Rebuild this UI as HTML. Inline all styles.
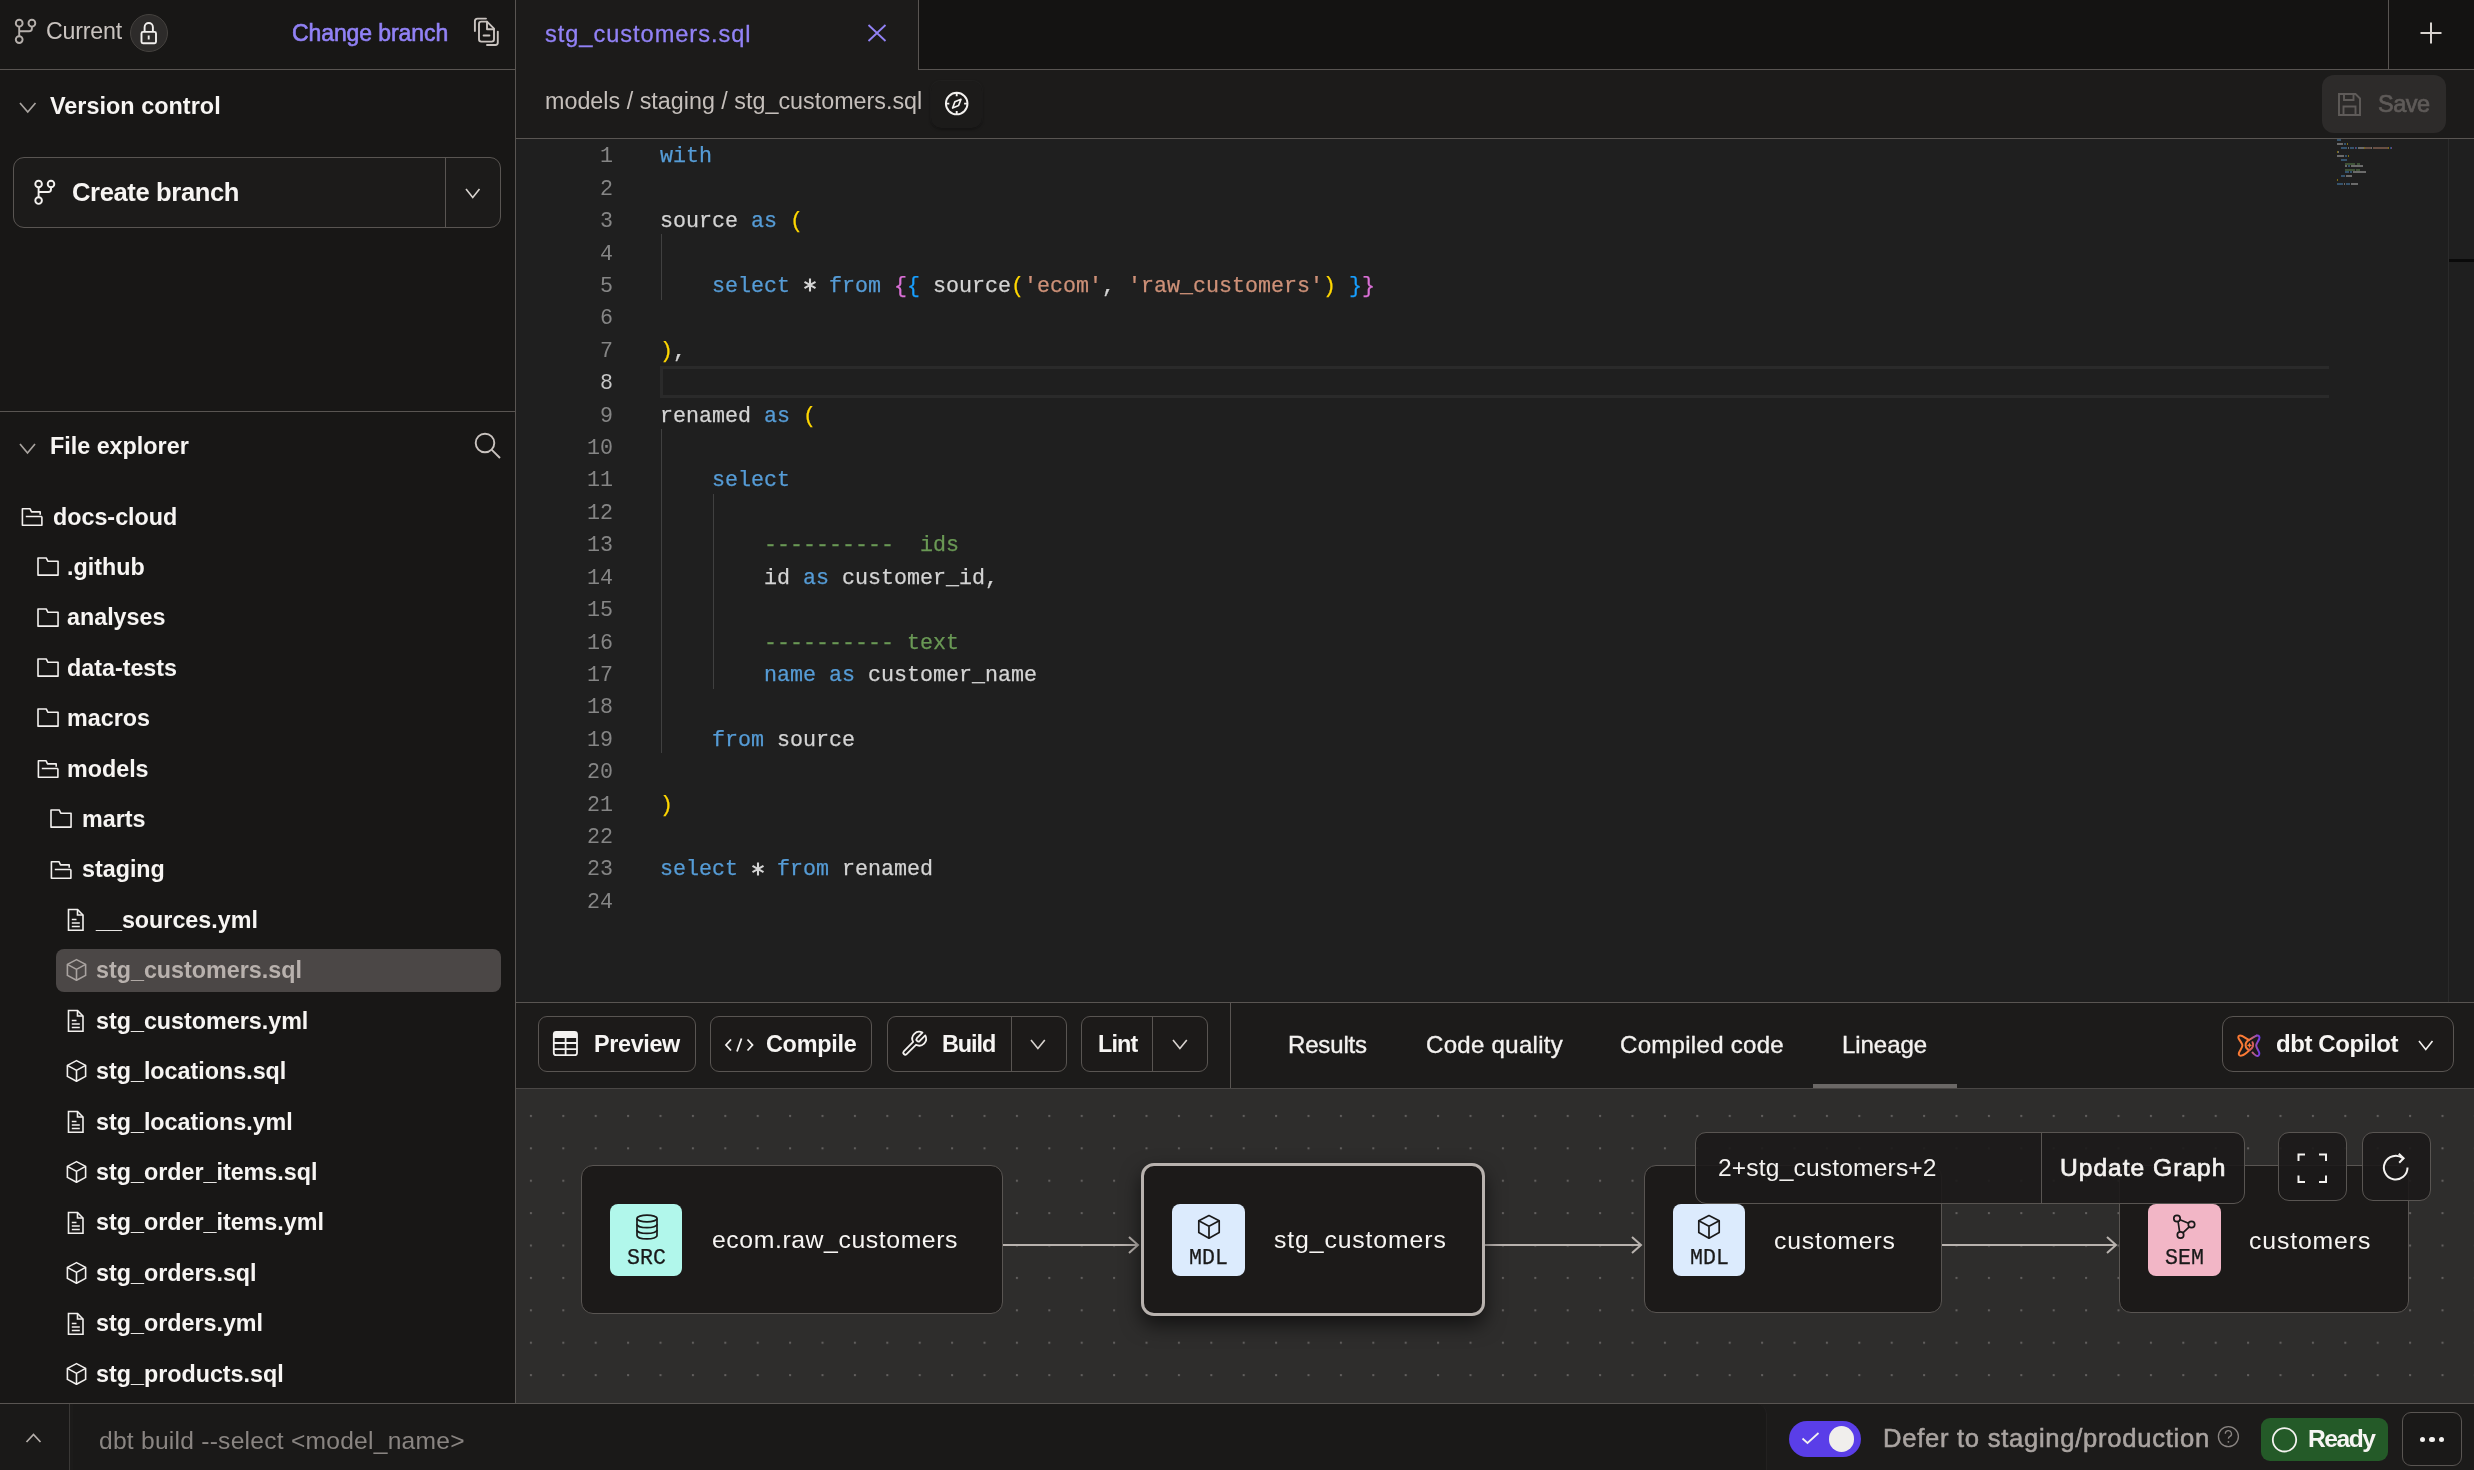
<!DOCTYPE html><html><head><meta charset="utf-8"><style>
html,body{margin:0;padding:0;background:#181716;}
body{width:2474px;height:1470px;position:relative;overflow:hidden;}
.r{position:absolute;box-sizing:border-box;}
.t{position:absolute;white-space:pre;line-height:1;will-change:transform;}
</style></head><body>
<div class="r" style="left:0.0px;top:0.0px;width:515.0px;height:1403.0px;background:#181716"></div>
<div class="r" style="left:516.0px;top:0.0px;width:1958.0px;height:1003.0px;background:#1f1f1f"></div>
<div class="r" style="left:516.0px;top:0.0px;width:402.0px;height:69.0px;background:#1c1b1a"></div>
<div class="r" style="left:918.0px;top:0.0px;width:1556.0px;height:69.0px;background:#141312"></div>
<div class="r" style="left:516.0px;top:69.0px;width:1958.0px;height:69.0px;background:#1c1b1a"></div>
<div class="r" style="left:515.0px;top:0.0px;width:1.0px;height:1403.0px;background:#595552"></div>
<div class="r" style="left:0.0px;top:69.0px;width:515.0px;height:1.0px;background:#595552"></div>
<div class="r" style="left:918.0px;top:0.0px;width:1.0px;height:69.0px;background:#595552"></div>
<div class="r" style="left:918.0px;top:69.0px;width:1556.0px;height:1.0px;background:#595552"></div>
<div class="r" style="left:2388.0px;top:0.0px;width:1.0px;height:69.0px;background:#595552"></div>
<div class="r" style="left:516.0px;top:138.0px;width:1958.0px;height:1.0px;background:#595552"></div>
<div class="r" style="left:0.0px;top:411.0px;width:515.0px;height:1.0px;background:#595552"></div>
<svg class="r" style="left:10.0px;top:15.0px;" width="30" height="32" viewBox="0 0 30 32" fill="none"><g stroke="#b5afab" stroke-width="1.9" fill="none">
<circle cx="9.2" cy="8.2" r="3.4"/><circle cx="21.9" cy="8.2" r="3.4"/><circle cx="9.2" cy="24.6" r="3.4"/>
<path d="M9.2 11.6V21.2"/><path d="M21.9 11.6V13.5Q21.9 16.3 19 16.3H9.2"/></g></svg>
<div class="t" style="left:46.0px;top:19.5px;font-size:23.20px;color:#c9c3bf;font-weight:400;font-family:'Liberation Sans', sans-serif;letter-spacing:-0.194px;">Current</div>
<div class="r" style="left:130.0px;top:13.8px;width:38.0px;height:38.0px;background:#2d2b2a;border:1.5px solid #45423f;border-radius:50%"></div>
<svg class="r" style="left:136.0px;top:18.0px;" width="26" height="30" viewBox="0 0 26 30" fill="none"><g stroke="#f2f0ee" stroke-width="1.9" fill="none">
<rect x="5.5" y="13.9" width="14.5" height="11.3" rx="1.5"/><path d="M8.6 13.9V9.2a4.15 4.15 0 0 1 8.3 0V13.9"/><path d="M12.7 17.5V21.5"/></g></svg>
<div class="t" style="left:292.0px;top:21.5px;font-size:23.00px;color:#9282f6;font-weight:400;font-family:'Liberation Sans', sans-serif;letter-spacing:-0.091px;-webkit-text-stroke:0.6px #9282f6;">Change branch</div>
<svg class="r" style="left:470.0px;top:14.0px;" width="34" height="34" viewBox="0 0 34 34" fill="none"><g stroke="#c9c3bf" stroke-width="1.9" fill="none" stroke-linecap="round" stroke-linejoin="round">
<path d="M4.9 17V7.2Q4.9 4.6 7.5 4.6H16"/><path d="M11.3 7.6H17L24 14.6V25.3Q24 27.6 21.7 27.6H11.3Q9 27.6 9 25.3V9.9Q9 7.6 11.3 7.6Z"/><path d="M17 7.8V15.2H23.8"/><path d="M13.6 21.5H19.4"/><path d="M27.8 17.6V28.5Q27.8 31 25.3 31H17"/></g></svg>
<svg class="r" style="left:17.5px;top:100.5px;" width="19.5" height="13" viewBox="0 0 19.5 13" fill="none"><path d="M2 2L9.75 11L17.5 2" stroke="#a9a4a0" stroke-width="1.7" fill="none"/></svg>
<div class="t" style="left:50.0px;top:94.7px;font-size:23.40px;color:#f7f5f3;font-weight:700;font-family:'Liberation Sans', sans-serif;letter-spacing:0.026px;">Version control</div>
<div class="r" style="left:13.0px;top:156.5px;width:488.0px;height:71.0px;border:1.5px solid #595552;border-radius:11px;background:#1c1b1a"></div>
<div class="r" style="left:444.5px;top:157.0px;width:1.5px;height:70.0px;background:#595552"></div>
<svg class="r" style="left:463.5px;top:186.5px;" width="17.5" height="12.5" viewBox="0 0 17.5 12.5" fill="none"><path d="M2 2L8.75 10.5L15.5 2" stroke="#d8d3cf" stroke-width="1.6" fill="none"/></svg>
<svg class="r" style="left:30.0px;top:177.0px;" width="30" height="30" viewBox="0 0 30 30" fill="none"><g stroke="#f4f2f0" stroke-width="1.9" fill="none">
<circle cx="8.6" cy="7" r="3.3"/><circle cx="21" cy="7" r="3.3"/><circle cx="8.6" cy="23.6" r="3.3"/>
<path d="M8.6 10.3V20.3"/><path d="M21 10.3V12.2Q21 15 18.2 15H8.6"/></g></svg>
<div class="t" style="left:72.0px;top:179.6px;font-size:25.60px;color:#f7f5f3;font-weight:700;font-family:'Liberation Sans', sans-serif;letter-spacing:-0.388px;">Create branch</div>
<svg class="r" style="left:18.0px;top:441.5px;" width="19" height="13" viewBox="0 0 19 13" fill="none"><path d="M2 2L9.5 11L17 2" stroke="#a9a4a0" stroke-width="1.7" fill="none"/></svg>
<div class="t" style="left:50.0px;top:435.4px;font-size:23.40px;color:#f7f5f3;font-weight:700;font-family:'Liberation Sans', sans-serif;letter-spacing:-0.030px;">File explorer</div>
<svg class="r" style="left:472.0px;top:430.0px;" width="32" height="32" viewBox="0 0 32 32" fill="none"><g stroke="#c9c3bf" stroke-width="1.9" fill="none"><circle cx="13" cy="13" r="9.3"/><path d="M19.8 19.8L28 28"/></g></svg>
<svg class="r" style="left:19.3px;top:505.7px;" width="26" height="23" viewBox="0 0 26 23" fill="none"><path d="M22.9 10.5V19.2H3.4V2.8H11.1L12.5 5.9H21.2V8.8M6.8 10.5H22.9" stroke="#f2f0ee" stroke-width="1.6" fill="none" stroke-linejoin="round"/></svg>
<div class="t" style="left:53.0px;top:505.6px;font-size:23.30px;color:#f7f5f3;font-weight:700;font-family:'Liberation Sans', sans-serif;">docs-cloud</div>
<svg class="r" style="left:34.5px;top:556.1px;" width="26" height="23" viewBox="0 0 26 23" fill="none"><path d="M3 19.15V1.95H11.2L12.8 5.2H23.05V19.15Z" stroke="#f2f0ee" stroke-width="1.6" fill="none" stroke-linejoin="round"/></svg>
<div class="t" style="left:67.3px;top:556.0px;font-size:23.30px;color:#f7f5f3;font-weight:700;font-family:'Liberation Sans', sans-serif;">.github</div>
<svg class="r" style="left:34.5px;top:606.5px;" width="26" height="23" viewBox="0 0 26 23" fill="none"><path d="M3 19.15V1.95H11.2L12.8 5.2H23.05V19.15Z" stroke="#f2f0ee" stroke-width="1.6" fill="none" stroke-linejoin="round"/></svg>
<div class="t" style="left:67.3px;top:606.4px;font-size:23.30px;color:#f7f5f3;font-weight:700;font-family:'Liberation Sans', sans-serif;">analyses</div>
<svg class="r" style="left:34.5px;top:656.9px;" width="26" height="23" viewBox="0 0 26 23" fill="none"><path d="M3 19.15V1.95H11.2L12.8 5.2H23.05V19.15Z" stroke="#f2f0ee" stroke-width="1.6" fill="none" stroke-linejoin="round"/></svg>
<div class="t" style="left:67.3px;top:656.8px;font-size:23.30px;color:#f7f5f3;font-weight:700;font-family:'Liberation Sans', sans-serif;">data-tests</div>
<svg class="r" style="left:34.5px;top:707.3px;" width="26" height="23" viewBox="0 0 26 23" fill="none"><path d="M3 19.15V1.95H11.2L12.8 5.2H23.05V19.15Z" stroke="#f2f0ee" stroke-width="1.6" fill="none" stroke-linejoin="round"/></svg>
<div class="t" style="left:67.3px;top:707.2px;font-size:23.30px;color:#f7f5f3;font-weight:700;font-family:'Liberation Sans', sans-serif;">macros</div>
<svg class="r" style="left:34.5px;top:757.7px;" width="26" height="23" viewBox="0 0 26 23" fill="none"><path d="M22.9 10.5V19.2H3.4V2.8H11.1L12.5 5.9H21.2V8.8M6.8 10.5H22.9" stroke="#f2f0ee" stroke-width="1.6" fill="none" stroke-linejoin="round"/></svg>
<div class="t" style="left:67.3px;top:757.6px;font-size:23.30px;color:#f7f5f3;font-weight:700;font-family:'Liberation Sans', sans-serif;">models</div>
<svg class="r" style="left:48.4px;top:808.2px;" width="26" height="23" viewBox="0 0 26 23" fill="none"><path d="M3 19.15V1.95H11.2L12.8 5.2H23.05V19.15Z" stroke="#f2f0ee" stroke-width="1.6" fill="none" stroke-linejoin="round"/></svg>
<div class="t" style="left:82.0px;top:808.0px;font-size:23.30px;color:#f7f5f3;font-weight:700;font-family:'Liberation Sans', sans-serif;">marts</div>
<svg class="r" style="left:48.4px;top:858.6px;" width="26" height="23" viewBox="0 0 26 23" fill="none"><path d="M22.9 10.5V19.2H3.4V2.8H11.1L12.5 5.9H21.2V8.8M6.8 10.5H22.9" stroke="#f2f0ee" stroke-width="1.6" fill="none" stroke-linejoin="round"/></svg>
<div class="t" style="left:82.0px;top:858.4px;font-size:23.30px;color:#f7f5f3;font-weight:700;font-family:'Liberation Sans', sans-serif;">staging</div>
<svg class="r" style="left:65.5px;top:907.2px;" width="21" height="26" viewBox="0 0 21 26" fill="none"><g stroke="#f2f0ee" stroke-width="1.6" fill="none"><path d="M2.5 2.5H11.5L17 8V23.2H2.5Z"/><path d="M11.5 2.5V8H17"/><path d="M5.8 12.5H10.5M5.8 16H13.8M5.8 19.5H13.8"/></g></svg>
<div class="t" style="left:96.0px;top:908.9px;font-size:23.30px;color:#f7f5f3;font-weight:700;font-family:'Liberation Sans', sans-serif;">__sources.yml</div>
<div class="r" style="left:56.0px;top:949.3px;width:445.0px;height:42.4px;background:#4b4746;border-radius:8px"></div>
<svg class="r" style="left:63.5px;top:957.4px;" width="25" height="26" viewBox="0 0 25 26" fill="none"><g stroke="#a9a3a0" stroke-width="1.6" fill="none" stroke-linejoin="round"><path d="M12.5 2.6L21.6 7.4V18.4L12.5 23.3L3.4 18.4V7.4Z"/><path d="M3.4 7.4L12.5 12.4L21.6 7.4M12.5 12.4V23.3"/></g></svg>
<div class="t" style="left:96.0px;top:959.3px;font-size:23.30px;color:#b8b1ad;font-weight:700;font-family:'Liberation Sans', sans-serif;">stg_customers.sql</div>
<svg class="r" style="left:65.5px;top:1008.0px;" width="21" height="26" viewBox="0 0 21 26" fill="none"><g stroke="#f2f0ee" stroke-width="1.6" fill="none"><path d="M2.5 2.5H11.5L17 8V23.2H2.5Z"/><path d="M11.5 2.5V8H17"/><path d="M5.8 12.5H10.5M5.8 16H13.8M5.8 19.5H13.8"/></g></svg>
<div class="t" style="left:96.0px;top:1009.7px;font-size:23.30px;color:#f7f5f3;font-weight:700;font-family:'Liberation Sans', sans-serif;">stg_customers.yml</div>
<svg class="r" style="left:63.5px;top:1058.2px;" width="25" height="26" viewBox="0 0 25 26" fill="none"><g stroke="#f2f0ee" stroke-width="1.6" fill="none" stroke-linejoin="round"><path d="M12.5 2.6L21.6 7.4V18.4L12.5 23.3L3.4 18.4V7.4Z"/><path d="M3.4 7.4L12.5 12.4L21.6 7.4M12.5 12.4V23.3"/></g></svg>
<div class="t" style="left:96.0px;top:1060.1px;font-size:23.30px;color:#f7f5f3;font-weight:700;font-family:'Liberation Sans', sans-serif;">stg_locations.sql</div>
<svg class="r" style="left:65.5px;top:1108.8px;" width="21" height="26" viewBox="0 0 21 26" fill="none"><g stroke="#f2f0ee" stroke-width="1.6" fill="none"><path d="M2.5 2.5H11.5L17 8V23.2H2.5Z"/><path d="M11.5 2.5V8H17"/><path d="M5.8 12.5H10.5M5.8 16H13.8M5.8 19.5H13.8"/></g></svg>
<div class="t" style="left:96.0px;top:1110.5px;font-size:23.30px;color:#f7f5f3;font-weight:700;font-family:'Liberation Sans', sans-serif;">stg_locations.yml</div>
<svg class="r" style="left:63.5px;top:1159.0px;" width="25" height="26" viewBox="0 0 25 26" fill="none"><g stroke="#f2f0ee" stroke-width="1.6" fill="none" stroke-linejoin="round"><path d="M12.5 2.6L21.6 7.4V18.4L12.5 23.3L3.4 18.4V7.4Z"/><path d="M3.4 7.4L12.5 12.4L21.6 7.4M12.5 12.4V23.3"/></g></svg>
<div class="t" style="left:96.0px;top:1160.9px;font-size:23.30px;color:#f7f5f3;font-weight:700;font-family:'Liberation Sans', sans-serif;">stg_order_items.sql</div>
<svg class="r" style="left:65.5px;top:1209.6px;" width="21" height="26" viewBox="0 0 21 26" fill="none"><g stroke="#f2f0ee" stroke-width="1.6" fill="none"><path d="M2.5 2.5H11.5L17 8V23.2H2.5Z"/><path d="M11.5 2.5V8H17"/><path d="M5.8 12.5H10.5M5.8 16H13.8M5.8 19.5H13.8"/></g></svg>
<div class="t" style="left:96.0px;top:1211.3px;font-size:23.30px;color:#f7f5f3;font-weight:700;font-family:'Liberation Sans', sans-serif;">stg_order_items.yml</div>
<svg class="r" style="left:63.5px;top:1259.8px;" width="25" height="26" viewBox="0 0 25 26" fill="none"><g stroke="#f2f0ee" stroke-width="1.6" fill="none" stroke-linejoin="round"><path d="M12.5 2.6L21.6 7.4V18.4L12.5 23.3L3.4 18.4V7.4Z"/><path d="M3.4 7.4L12.5 12.4L21.6 7.4M12.5 12.4V23.3"/></g></svg>
<div class="t" style="left:96.0px;top:1261.7px;font-size:23.30px;color:#f7f5f3;font-weight:700;font-family:'Liberation Sans', sans-serif;">stg_orders.sql</div>
<svg class="r" style="left:65.5px;top:1310.5px;" width="21" height="26" viewBox="0 0 21 26" fill="none"><g stroke="#f2f0ee" stroke-width="1.6" fill="none"><path d="M2.5 2.5H11.5L17 8V23.2H2.5Z"/><path d="M11.5 2.5V8H17"/><path d="M5.8 12.5H10.5M5.8 16H13.8M5.8 19.5H13.8"/></g></svg>
<div class="t" style="left:96.0px;top:1312.1px;font-size:23.30px;color:#f7f5f3;font-weight:700;font-family:'Liberation Sans', sans-serif;">stg_orders.yml</div>
<svg class="r" style="left:63.5px;top:1360.7px;" width="25" height="26" viewBox="0 0 25 26" fill="none"><g stroke="#f2f0ee" stroke-width="1.6" fill="none" stroke-linejoin="round"><path d="M12.5 2.6L21.6 7.4V18.4L12.5 23.3L3.4 18.4V7.4Z"/><path d="M3.4 7.4L12.5 12.4L21.6 7.4M12.5 12.4V23.3"/></g></svg>
<div class="t" style="left:96.0px;top:1362.5px;font-size:23.30px;color:#f7f5f3;font-weight:700;font-family:'Liberation Sans', sans-serif;">stg_products.sql</div>
<div class="t" style="left:545.3px;top:22.5px;font-size:23.60px;color:#9282f6;font-weight:400;font-family:'Liberation Sans', sans-serif;letter-spacing:0.963px;-webkit-text-stroke:0.3px #9282f6;">stg_customers.sql</div>
<svg class="r" style="left:866.0px;top:23.0px;" width="22" height="20" viewBox="0 0 22 20" fill="none"><path d="M2.5 2L19.5 18M19.5 2L2.5 18" stroke="#9282f6" stroke-width="1.8"/></svg>
<svg class="r" style="left:2418.0px;top:20.0px;" width="26" height="26" viewBox="0 0 26 26" fill="none"><path d="M13 2.5V23.5M2.5 13H23.5" stroke="#d8d3cf" stroke-width="2"/></svg>
<div class="t" style="left:545.3px;top:89.5px;font-size:23.30px;color:#c5bfbb;font-weight:400;font-family:'Liberation Sans', sans-serif;letter-spacing:0.013px;">models / staging / stg_customers.sql</div>
<div class="r" style="left:931.0px;top:80.5px;width:51.0px;height:47.0px;background:#1c1b1a;border-radius:10px;box-shadow:0 1px 3px rgba(0,0,0,0.6), 0 0 0 1px rgba(255,255,255,0.03)"></div>
<svg class="r" style="left:942.0px;top:89.0px;" width="30" height="30" viewBox="0 0 30 30" fill="none"><g stroke="#f4f2f0" stroke-width="1.9" fill="none"><circle cx="14.7" cy="14.6" r="10.8"/>
<path d="M14.7 3.8V7.2M14.7 22V25.4M3.9 14.6H7.3M22.1 14.6H25.5"/><path d="M19 10.3L16.6 16.5L10.6 19L12.9 12.8Z" stroke-width="1.7" stroke-linejoin="round"/></g></svg>
<div class="r" style="left:2322.0px;top:75.0px;width:124.0px;height:58.0px;background:#2d2b2a;border-radius:12px"></div>
<svg class="r" style="left:2336.0px;top:91.0px;" width="27" height="27" viewBox="0 0 27 27" fill="none"><g stroke="#5f5b59" stroke-width="1.9" fill="none"><path d="M3 3H19.5L24 7.5V24H3Z"/><path d="M8 3V9H17.5V3"/><path d="M7.5 24V15.5H19.5V24"/></g></svg>
<div class="t" style="left:2377.6px;top:92.9px;font-size:23.50px;color:#5f5b59;font-weight:400;font-family:'Liberation Sans', sans-serif;letter-spacing:-0.522px;-webkit-text-stroke:0.7px #5f5b59;">Save</div>
<div class="r" style="left:660.0px;top:366.0px;width:1669.0px;height:32.0px;border-top:3px solid #2a2a2a;border-bottom:3px solid #2a2a2a;border-left:3px solid #2a2a2a"></div>
<div class="r" style="left:660.5px;top:234.0px;width:1.5px;height:66.0px;background:#404040"></div>
<div class="r" style="left:660.5px;top:429.0px;width:1.5px;height:324.0px;background:#404040"></div>
<div class="r" style="left:712.5px;top:494.0px;width:1.5px;height:195.0px;background:#404040"></div>
<div class="t" style="left:600.0px;top:146.3px;font-size:21.67px;color:#858585;font-weight:400;font-family:'Liberation Mono', monospace;">1</div>
<div class="t" style="left:660.0px;top:146.3px;font-size:21.67px;color:#569cd6;font-weight:400;font-family:'Liberation Mono', monospace;-webkit-text-stroke:0.25px #569cd6;">with</div>
<div class="t" style="left:600.0px;top:178.7px;font-size:21.67px;color:#858585;font-weight:400;font-family:'Liberation Mono', monospace;">2</div>
<div class="t" style="left:600.0px;top:211.1px;font-size:21.67px;color:#858585;font-weight:400;font-family:'Liberation Mono', monospace;">3</div>
<div class="t" style="left:660.0px;top:211.1px;font-size:21.67px;color:#d4d4d4;font-weight:400;font-family:'Liberation Mono', monospace;-webkit-text-stroke:0.25px #d4d4d4;">source</div>
<div class="t" style="left:751.0px;top:211.1px;font-size:21.67px;color:#569cd6;font-weight:400;font-family:'Liberation Mono', monospace;-webkit-text-stroke:0.25px #569cd6;">as</div>
<div class="t" style="left:790.0px;top:211.1px;font-size:21.67px;color:#ffd700;font-weight:400;font-family:'Liberation Mono', monospace;-webkit-text-stroke:0.25px #ffd700;">(</div>
<div class="t" style="left:600.0px;top:243.5px;font-size:21.67px;color:#858585;font-weight:400;font-family:'Liberation Mono', monospace;">4</div>
<div class="t" style="left:600.0px;top:275.9px;font-size:21.67px;color:#858585;font-weight:400;font-family:'Liberation Mono', monospace;">5</div>
<div class="t" style="left:712.0px;top:275.9px;font-size:21.67px;color:#569cd6;font-weight:400;font-family:'Liberation Mono', monospace;-webkit-text-stroke:0.25px #569cd6;">select</div>
<svg class="r" style="left:801.5px;top:277.2px;" width="16" height="16" viewBox="0 0 16 16" fill="none"><g stroke="#d4d4d4" stroke-width="2.1" stroke-linecap="butt"><path d="M8 1.6V14.4M2.5 4.8L13.5 11.2M2.5 11.2L13.5 4.8"/></g></svg>
<div class="t" style="left:829.0px;top:275.9px;font-size:21.67px;color:#569cd6;font-weight:400;font-family:'Liberation Mono', monospace;-webkit-text-stroke:0.25px #569cd6;">from</div>
<div class="t" style="left:894.0px;top:275.9px;font-size:21.67px;color:#da70d6;font-weight:400;font-family:'Liberation Mono', monospace;-webkit-text-stroke:0.25px #da70d6;">{</div>
<div class="t" style="left:907.0px;top:275.9px;font-size:21.67px;color:#179fff;font-weight:400;font-family:'Liberation Mono', monospace;-webkit-text-stroke:0.25px #179fff;">{</div>
<div class="t" style="left:933.0px;top:275.9px;font-size:21.67px;color:#d4d4d4;font-weight:400;font-family:'Liberation Mono', monospace;-webkit-text-stroke:0.25px #d4d4d4;">source</div>
<div class="t" style="left:1011.0px;top:275.9px;font-size:21.67px;color:#ffd700;font-weight:400;font-family:'Liberation Mono', monospace;-webkit-text-stroke:0.25px #ffd700;">(</div>
<div class="t" style="left:1024.0px;top:275.9px;font-size:21.67px;color:#ce9178;font-weight:400;font-family:'Liberation Mono', monospace;-webkit-text-stroke:0.25px #ce9178;">&#x27;ecom&#x27;</div>
<div class="t" style="left:1102.0px;top:275.9px;font-size:21.67px;color:#d4d4d4;font-weight:400;font-family:'Liberation Mono', monospace;-webkit-text-stroke:0.25px #d4d4d4;">,</div>
<div class="t" style="left:1128.0px;top:275.9px;font-size:21.67px;color:#ce9178;font-weight:400;font-family:'Liberation Mono', monospace;-webkit-text-stroke:0.25px #ce9178;">&#x27;raw_customers&#x27;</div>
<div class="t" style="left:1323.0px;top:275.9px;font-size:21.67px;color:#ffd700;font-weight:400;font-family:'Liberation Mono', monospace;-webkit-text-stroke:0.25px #ffd700;">)</div>
<div class="t" style="left:1349.0px;top:275.9px;font-size:21.67px;color:#179fff;font-weight:400;font-family:'Liberation Mono', monospace;-webkit-text-stroke:0.25px #179fff;">}</div>
<div class="t" style="left:1362.0px;top:275.9px;font-size:21.67px;color:#da70d6;font-weight:400;font-family:'Liberation Mono', monospace;-webkit-text-stroke:0.25px #da70d6;">}</div>
<div class="t" style="left:600.0px;top:308.4px;font-size:21.67px;color:#858585;font-weight:400;font-family:'Liberation Mono', monospace;">6</div>
<div class="t" style="left:600.0px;top:340.8px;font-size:21.67px;color:#858585;font-weight:400;font-family:'Liberation Mono', monospace;">7</div>
<div class="t" style="left:660.0px;top:340.8px;font-size:21.67px;color:#ffd700;font-weight:400;font-family:'Liberation Mono', monospace;-webkit-text-stroke:0.25px #ffd700;">)</div>
<div class="t" style="left:673.0px;top:340.8px;font-size:21.67px;color:#d4d4d4;font-weight:400;font-family:'Liberation Mono', monospace;-webkit-text-stroke:0.25px #d4d4d4;">,</div>
<div class="t" style="left:600.0px;top:373.2px;font-size:21.67px;color:#c6c6c6;font-weight:400;font-family:'Liberation Mono', monospace;">8</div>
<div class="t" style="left:600.0px;top:405.6px;font-size:21.67px;color:#858585;font-weight:400;font-family:'Liberation Mono', monospace;">9</div>
<div class="t" style="left:660.0px;top:405.6px;font-size:21.67px;color:#d4d4d4;font-weight:400;font-family:'Liberation Mono', monospace;-webkit-text-stroke:0.25px #d4d4d4;">renamed</div>
<div class="t" style="left:764.0px;top:405.6px;font-size:21.67px;color:#569cd6;font-weight:400;font-family:'Liberation Mono', monospace;-webkit-text-stroke:0.25px #569cd6;">as</div>
<div class="t" style="left:803.0px;top:405.6px;font-size:21.67px;color:#ffd700;font-weight:400;font-family:'Liberation Mono', monospace;-webkit-text-stroke:0.25px #ffd700;">(</div>
<div class="t" style="left:587.0px;top:438.0px;font-size:21.67px;color:#858585;font-weight:400;font-family:'Liberation Mono', monospace;">10</div>
<div class="t" style="left:587.0px;top:470.4px;font-size:21.67px;color:#858585;font-weight:400;font-family:'Liberation Mono', monospace;">11</div>
<div class="t" style="left:712.0px;top:470.4px;font-size:21.67px;color:#569cd6;font-weight:400;font-family:'Liberation Mono', monospace;-webkit-text-stroke:0.25px #569cd6;">select</div>
<div class="t" style="left:587.0px;top:502.8px;font-size:21.67px;color:#858585;font-weight:400;font-family:'Liberation Mono', monospace;">12</div>
<div class="t" style="left:587.0px;top:535.2px;font-size:21.67px;color:#858585;font-weight:400;font-family:'Liberation Mono', monospace;">13</div>
<div class="t" style="left:764.0px;top:535.2px;font-size:21.67px;color:#6a9955;font-weight:400;font-family:'Liberation Mono', monospace;-webkit-text-stroke:0.25px #6a9955;">----------  ids</div>
<div class="t" style="left:587.0px;top:567.6px;font-size:21.67px;color:#858585;font-weight:400;font-family:'Liberation Mono', monospace;">14</div>
<div class="t" style="left:764.0px;top:567.6px;font-size:21.67px;color:#d4d4d4;font-weight:400;font-family:'Liberation Mono', monospace;-webkit-text-stroke:0.25px #d4d4d4;">id</div>
<div class="t" style="left:803.0px;top:567.6px;font-size:21.67px;color:#569cd6;font-weight:400;font-family:'Liberation Mono', monospace;-webkit-text-stroke:0.25px #569cd6;">as</div>
<div class="t" style="left:842.0px;top:567.6px;font-size:21.67px;color:#d4d4d4;font-weight:400;font-family:'Liberation Mono', monospace;-webkit-text-stroke:0.25px #d4d4d4;">customer_id,</div>
<div class="t" style="left:587.0px;top:600.0px;font-size:21.67px;color:#858585;font-weight:400;font-family:'Liberation Mono', monospace;">15</div>
<div class="t" style="left:587.0px;top:632.5px;font-size:21.67px;color:#858585;font-weight:400;font-family:'Liberation Mono', monospace;">16</div>
<div class="t" style="left:764.0px;top:632.5px;font-size:21.67px;color:#6a9955;font-weight:400;font-family:'Liberation Mono', monospace;-webkit-text-stroke:0.25px #6a9955;">---------- text</div>
<div class="t" style="left:587.0px;top:664.9px;font-size:21.67px;color:#858585;font-weight:400;font-family:'Liberation Mono', monospace;">17</div>
<div class="t" style="left:764.0px;top:664.9px;font-size:21.67px;color:#569cd6;font-weight:400;font-family:'Liberation Mono', monospace;-webkit-text-stroke:0.25px #569cd6;">name</div>
<div class="t" style="left:829.0px;top:664.9px;font-size:21.67px;color:#569cd6;font-weight:400;font-family:'Liberation Mono', monospace;-webkit-text-stroke:0.25px #569cd6;">as</div>
<div class="t" style="left:868.0px;top:664.9px;font-size:21.67px;color:#d4d4d4;font-weight:400;font-family:'Liberation Mono', monospace;-webkit-text-stroke:0.25px #d4d4d4;">customer_name</div>
<div class="t" style="left:587.0px;top:697.3px;font-size:21.67px;color:#858585;font-weight:400;font-family:'Liberation Mono', monospace;">18</div>
<div class="t" style="left:587.0px;top:729.7px;font-size:21.67px;color:#858585;font-weight:400;font-family:'Liberation Mono', monospace;">19</div>
<div class="t" style="left:712.0px;top:729.7px;font-size:21.67px;color:#569cd6;font-weight:400;font-family:'Liberation Mono', monospace;-webkit-text-stroke:0.25px #569cd6;">from</div>
<div class="t" style="left:777.0px;top:729.7px;font-size:21.67px;color:#d4d4d4;font-weight:400;font-family:'Liberation Mono', monospace;-webkit-text-stroke:0.25px #d4d4d4;">source</div>
<div class="t" style="left:587.0px;top:762.1px;font-size:21.67px;color:#858585;font-weight:400;font-family:'Liberation Mono', monospace;">20</div>
<div class="t" style="left:587.0px;top:794.5px;font-size:21.67px;color:#858585;font-weight:400;font-family:'Liberation Mono', monospace;">21</div>
<div class="t" style="left:660.0px;top:794.5px;font-size:21.67px;color:#ffd700;font-weight:400;font-family:'Liberation Mono', monospace;-webkit-text-stroke:0.25px #ffd700;">)</div>
<div class="t" style="left:587.0px;top:826.9px;font-size:21.67px;color:#858585;font-weight:400;font-family:'Liberation Mono', monospace;">22</div>
<div class="t" style="left:587.0px;top:859.3px;font-size:21.67px;color:#858585;font-weight:400;font-family:'Liberation Mono', monospace;">23</div>
<div class="t" style="left:660.0px;top:859.3px;font-size:21.67px;color:#569cd6;font-weight:400;font-family:'Liberation Mono', monospace;-webkit-text-stroke:0.25px #569cd6;">select</div>
<svg class="r" style="left:749.5px;top:860.6px;" width="16" height="16" viewBox="0 0 16 16" fill="none"><g stroke="#d4d4d4" stroke-width="2.1" stroke-linecap="butt"><path d="M8 1.6V14.4M2.5 4.8L13.5 11.2M2.5 11.2L13.5 4.8"/></g></svg>
<div class="t" style="left:777.0px;top:859.3px;font-size:21.67px;color:#569cd6;font-weight:400;font-family:'Liberation Mono', monospace;-webkit-text-stroke:0.25px #569cd6;">from</div>
<div class="t" style="left:842.0px;top:859.3px;font-size:21.67px;color:#d4d4d4;font-weight:400;font-family:'Liberation Mono', monospace;-webkit-text-stroke:0.25px #d4d4d4;">renamed</div>
<div class="t" style="left:587.0px;top:891.7px;font-size:21.67px;color:#858585;font-weight:400;font-family:'Liberation Mono', monospace;">24</div>
<div class="r" style="left:2337.0px;top:139.0px;width:4.0px;height:1.5px;background:#569cd6;opacity:0.42"></div>
<div class="r" style="left:2337.0px;top:143.0px;width:6.0px;height:1.5px;background:#d4d4d4;opacity:0.42"></div>
<div class="r" style="left:2344.0px;top:143.0px;width:2.0px;height:1.5px;background:#569cd6;opacity:0.42"></div>
<div class="r" style="left:2347.0px;top:143.0px;width:1.0px;height:1.5px;background:#ffd700;opacity:0.42"></div>
<div class="r" style="left:2341.0px;top:147.0px;width:6.0px;height:1.5px;background:#569cd6;opacity:0.42"></div>
<div class="r" style="left:2348.0px;top:147.0px;width:1.0px;height:1.5px;background:#d4d4d4;opacity:0.42"></div>
<div class="r" style="left:2350.0px;top:147.0px;width:4.0px;height:1.5px;background:#569cd6;opacity:0.42"></div>
<div class="r" style="left:2355.0px;top:147.0px;width:1.0px;height:1.5px;background:#da70d6;opacity:0.42"></div>
<div class="r" style="left:2356.0px;top:147.0px;width:1.0px;height:1.5px;background:#179fff;opacity:0.42"></div>
<div class="r" style="left:2358.0px;top:147.0px;width:6.0px;height:1.5px;background:#d4d4d4;opacity:0.42"></div>
<div class="r" style="left:2364.0px;top:147.0px;width:1.0px;height:1.5px;background:#ffd700;opacity:0.42"></div>
<div class="r" style="left:2365.0px;top:147.0px;width:6.0px;height:1.5px;background:#ce9178;opacity:0.42"></div>
<div class="r" style="left:2371.0px;top:147.0px;width:1.0px;height:1.5px;background:#d4d4d4;opacity:0.42"></div>
<div class="r" style="left:2373.0px;top:147.0px;width:15.0px;height:1.5px;background:#ce9178;opacity:0.42"></div>
<div class="r" style="left:2388.0px;top:147.0px;width:1.0px;height:1.5px;background:#ffd700;opacity:0.42"></div>
<div class="r" style="left:2390.0px;top:147.0px;width:1.0px;height:1.5px;background:#179fff;opacity:0.42"></div>
<div class="r" style="left:2391.0px;top:147.0px;width:1.0px;height:1.5px;background:#da70d6;opacity:0.42"></div>
<div class="r" style="left:2337.0px;top:151.0px;width:1.0px;height:1.5px;background:#ffd700;opacity:0.42"></div>
<div class="r" style="left:2338.0px;top:151.0px;width:1.0px;height:1.5px;background:#d4d4d4;opacity:0.42"></div>
<div class="r" style="left:2337.0px;top:155.0px;width:7.0px;height:1.5px;background:#d4d4d4;opacity:0.42"></div>
<div class="r" style="left:2345.0px;top:155.0px;width:2.0px;height:1.5px;background:#569cd6;opacity:0.42"></div>
<div class="r" style="left:2348.0px;top:155.0px;width:1.0px;height:1.5px;background:#ffd700;opacity:0.42"></div>
<div class="r" style="left:2341.0px;top:159.0px;width:6.0px;height:1.5px;background:#569cd6;opacity:0.42"></div>
<div class="r" style="left:2345.0px;top:163.0px;width:10.0px;height:1.5px;background:#6a9955;opacity:0.42"></div>
<div class="r" style="left:2357.0px;top:163.0px;width:3.0px;height:1.5px;background:#6a9955;opacity:0.42"></div>
<div class="r" style="left:2345.0px;top:165.0px;width:2.0px;height:1.5px;background:#d4d4d4;opacity:0.42"></div>
<div class="r" style="left:2348.0px;top:165.0px;width:2.0px;height:1.5px;background:#569cd6;opacity:0.42"></div>
<div class="r" style="left:2351.0px;top:165.0px;width:12.0px;height:1.5px;background:#d4d4d4;opacity:0.42"></div>
<div class="r" style="left:2345.0px;top:169.0px;width:10.0px;height:1.5px;background:#6a9955;opacity:0.42"></div>
<div class="r" style="left:2356.0px;top:169.0px;width:4.0px;height:1.5px;background:#6a9955;opacity:0.42"></div>
<div class="r" style="left:2345.0px;top:171.0px;width:4.0px;height:1.5px;background:#569cd6;opacity:0.42"></div>
<div class="r" style="left:2350.0px;top:171.0px;width:2.0px;height:1.5px;background:#569cd6;opacity:0.42"></div>
<div class="r" style="left:2353.0px;top:171.0px;width:13.0px;height:1.5px;background:#d4d4d4;opacity:0.42"></div>
<div class="r" style="left:2341.0px;top:175.0px;width:4.0px;height:1.5px;background:#569cd6;opacity:0.42"></div>
<div class="r" style="left:2346.0px;top:175.0px;width:6.0px;height:1.5px;background:#d4d4d4;opacity:0.42"></div>
<div class="r" style="left:2337.0px;top:179.0px;width:1.0px;height:1.5px;background:#ffd700;opacity:0.42"></div>
<div class="r" style="left:2337.0px;top:183.0px;width:6.0px;height:1.5px;background:#569cd6;opacity:0.42"></div>
<div class="r" style="left:2344.0px;top:183.0px;width:1.0px;height:1.5px;background:#d4d4d4;opacity:0.42"></div>
<div class="r" style="left:2346.0px;top:183.0px;width:4.0px;height:1.5px;background:#569cd6;opacity:0.42"></div>
<div class="r" style="left:2351.0px;top:183.0px;width:7.0px;height:1.5px;background:#d4d4d4;opacity:0.42"></div>
<div class="r" style="left:2448.0px;top:139.0px;width:1.0px;height:863.0px;background:#2b2b2b"></div>
<div class="r" style="left:2449.0px;top:259.0px;width:25.0px;height:3.0px;background:#0a0a0a"></div>
<div class="r" style="left:516.0px;top:1002.0px;width:1958.0px;height:1.0px;background:#595552"></div>
<div class="r" style="left:516.0px;top:1003.0px;width:1958.0px;height:85.0px;background:#1c1b1a"></div>
<div class="r" style="left:516.0px;top:1088.0px;width:1958.0px;height:1.0px;background:#4a4745"></div>
<div class="r" style="left:538.0px;top:1016.0px;width:158.0px;height:56.0px;border:1.5px solid #595552;border-radius:9px;background:#1c1a19"></div>
<svg class="r" style="left:550.0px;top:1028.0px;" width="32" height="32" viewBox="0 0 32 32" fill="none"><g stroke="#f4f2f0" stroke-width="1.8" fill="none"><rect x="3.8" y="3.8" width="23.2" height="23.4" rx="2.5"/>
<path d="M3.8 9H27M3.8 15H27M3.8 21.2H27M15.6 9V27"/></g><path d="M3.8 6.3a2.5 2.5 0 0 1 2.5-2.5H24.5a2.5 2.5 0 0 1 2.5 2.5V9H3.8Z" fill="#f4f2f0"/></svg>
<div class="t" style="left:593.7px;top:1033.4px;font-size:23.40px;color:#f7f5f3;font-weight:700;font-family:'Liberation Sans', sans-serif;letter-spacing:-0.360px;">Preview</div>
<div class="r" style="left:710.0px;top:1016.0px;width:162.0px;height:56.0px;border:1.5px solid #595552;border-radius:9px;background:#1c1a19"></div>
<svg class="r" style="left:722.0px;top:1036.0px;" width="34" height="18" viewBox="0 0 34 18" fill="none"><g stroke="#f4f2f0" stroke-width="1.8" fill="none"><path d="M9 3.5L4 9L9 14.5M25.5 3.5L30.5 9L25.5 14.5M19.5 2.5L15 15.5"/></g></svg>
<div class="t" style="left:765.7px;top:1033.4px;font-size:23.40px;color:#f7f5f3;font-weight:700;font-family:'Liberation Sans', sans-serif;letter-spacing:-0.268px;">Compile</div>
<div class="r" style="left:887.0px;top:1016.0px;width:180.0px;height:56.0px;border:1.5px solid #595552;border-radius:9px;background:#1c1a19"></div>
<div class="r" style="left:1010.8px;top:1016.5px;width:1.5px;height:55.0px;background:#595552"></div>
<svg class="r" style="left:895.0px;top:1025.0px;" width="40" height="37" viewBox="0 0 40 37" fill="none"><path d="M27.46 7.62L21.94 13.14A2 2 0 0 0 24.76 15.96L30.28 10.44A6.9 6.9 0 0 1 20.95 19.78L11.61 29.11A2 2 0 0 1 8.79 26.29L18.12 16.95A6.9 6.9 0 0 1 27.46 7.62Z" stroke="#f4f2f0" stroke-width="1.8" fill="none" stroke-linejoin="round"/></svg>
<div class="t" style="left:942.2px;top:1033.4px;font-size:23.40px;color:#f7f5f3;font-weight:700;font-family:'Liberation Sans', sans-serif;letter-spacing:-1.072px;">Build</div>
<svg class="r" style="left:1029.3px;top:1038.0px;" width="17.8" height="12.5" viewBox="0 0 17.8 12.5" fill="none"><path d="M2 2L8.9 10.5L15.8 2" stroke="#d8d3cf" stroke-width="1.6" fill="none"/></svg>
<div class="r" style="left:1081.0px;top:1016.0px;width:127.0px;height:56.0px;border:1.5px solid #595552;border-radius:9px;background:#1c1a19"></div>
<div class="r" style="left:1151.8px;top:1016.5px;width:1.5px;height:55.0px;background:#595552"></div>
<div class="t" style="left:1097.8px;top:1033.4px;font-size:23.40px;color:#f7f5f3;font-weight:700;font-family:'Liberation Sans', sans-serif;letter-spacing:-0.894px;">Lint</div>
<svg class="r" style="left:1171.4px;top:1038.0px;" width="17.8" height="12.5" viewBox="0 0 17.8 12.5" fill="none"><path d="M2 2L8.9 10.5L15.8 2" stroke="#d8d3cf" stroke-width="1.6" fill="none"/></svg>
<div class="r" style="left:1230.0px;top:1003.0px;width:1.0px;height:85.0px;background:#595552"></div>
<div class="t" style="left:1288.4px;top:1032.9px;font-size:24.00px;color:#f4f2f0;font-weight:400;font-family:'Liberation Sans', sans-serif;letter-spacing:-0.155px;-webkit-text-stroke:0.35px #f4f2f0;">Results</div>
<div class="t" style="left:1425.8px;top:1032.9px;font-size:24.00px;color:#f4f2f0;font-weight:400;font-family:'Liberation Sans', sans-serif;letter-spacing:0.307px;-webkit-text-stroke:0.35px #f4f2f0;">Code quality</div>
<div class="t" style="left:1620.4px;top:1032.9px;font-size:24.00px;color:#f4f2f0;font-weight:400;font-family:'Liberation Sans', sans-serif;letter-spacing:0.300px;-webkit-text-stroke:0.35px #f4f2f0;">Compiled code</div>
<div class="t" style="left:1842.4px;top:1032.9px;font-size:24.00px;color:#f4f2f0;font-weight:400;font-family:'Liberation Sans', sans-serif;letter-spacing:-0.054px;-webkit-text-stroke:0.35px #f4f2f0;">Lineage</div>
<div class="r" style="left:1813.0px;top:1084.0px;width:144.0px;height:4.0px;background:#6b6866"></div>
<div class="r" style="left:2222.0px;top:1016.0px;width:232.0px;height:56.0px;border:1.5px solid #595552;border-radius:11px;background:#1c1a19"></div>
<svg class="r" style="left:2231.0px;top:1028.5px;" width="36" height="32" viewBox="0 0 36 32" fill="none"><defs><linearGradient id="cg" gradientUnits="userSpaceOnUse" x1="17" y1="0" x2="29" y2="0"><stop offset="0" stop-color="#fb7a35"/><stop offset="1" stop-color="#6a38f2"/></linearGradient></defs>
<g stroke-width="2" fill="none" stroke-linecap="round" stroke-linejoin="round">
<path d="M18 11C14 9 11 6 8.5 6.6C7 7.1 7 8.6 8 10.2C10 13 11.5 15 11.4 16.6C11.2 18.6 9.2 21 8.1 23.5C7.2 25.6 8.2 27 10.5 26.6C14 25.6 16.5 23 18.5 21" stroke="#fb7a35"/>
<path d="M18.5 21C13.6 19.5 13.2 13.5 18 11C21 9 23.5 7.5 25.5 6.6" stroke="url(#cg)"/>
<path d="M25.5 6.6C27.6 6 29.2 7.6 28.2 10C27.2 12.5 25.2 14.6 25.2 16.6C25.2 18.6 27.2 21 28.2 23.5C29 26 27.2 27.6 25.2 26.7C24 26.1 22.6 24.6 21.5 23.6" stroke="url(#cg)"/>
<path d="M21.5 13.2C23 15.8 22 19.2 18.5 21" stroke="#d8625e"/></g>
<path d="M18.5 13.6L19.4 15.4L21.2 16.3L19.4 17.2L18.5 19L17.6 17.2L15.8 16.3L17.6 15.4Z" fill="#fb7a35"/></svg>
<div class="t" style="left:2275.6px;top:1032.3px;font-size:24.00px;color:#f7f5f3;font-weight:700;font-family:'Liberation Sans', sans-serif;letter-spacing:-0.422px;">dbt Copilot</div>
<svg class="r" style="left:2416.7px;top:1038.5px;" width="17.5" height="12.5" viewBox="0 0 17.5 12.5" fill="none"><path d="M2 2L8.75 10.5L15.5 2" stroke="#f4f2f0" stroke-width="1.6" fill="none"/></svg>
<div class="r" style="left:516.0px;top:1089.0px;width:1958.0px;height:314.0px;background:#2e2d2c"></div>
<svg class="r" style="left:516px;top:1089px" width="1958" height="314"><defs><pattern id="dots" x="13.90" y="25.90" width="32.4" height="32.4" patternUnits="userSpaceOnUse"><circle cx="1" cy="1" r="1.15" fill="#646160"/></pattern></defs><rect width="1958" height="314" fill="url(#dots)"/></svg>
<div class="r" style="left:1003.0px;top:1244.4px;width:134.5px;height:2.0px;background:#b8b2ae"></div>
<svg class="r" style="left:1126.5px;top:1235.4px;" width="13" height="20" viewBox="0 0 13 20" fill="none"><path d="M2 2L11 10L2 18" stroke="#b8b2ae" stroke-width="2" fill="none"/></svg>
<div class="r" style="left:1485.0px;top:1244.4px;width:155.5px;height:2.0px;background:#b8b2ae"></div>
<svg class="r" style="left:1629.5px;top:1235.4px;" width="13" height="20" viewBox="0 0 13 20" fill="none"><path d="M2 2L11 10L2 18" stroke="#b8b2ae" stroke-width="2" fill="none"/></svg>
<div class="r" style="left:1942.4px;top:1244.4px;width:173.4px;height:2.0px;background:#b8b2ae"></div>
<svg class="r" style="left:2104.8px;top:1235.4px;" width="13" height="20" viewBox="0 0 13 20" fill="none"><path d="M2 2L11 10L2 18" stroke="#b8b2ae" stroke-width="2" fill="none"/></svg>
<div class="r" style="left:580.5px;top:1164.5px;width:422.5px;height:149.0px;background:#1c1a19;border:1.5px solid #595552;border-radius:12px"></div>
<div class="r" style="left:609.8px;top:1203.5px;width:72.5px;height:72.3px;background:#b1f7eb;border-radius:8px"></div>
<svg class="r" style="left:633.8px;top:1212.5px;" width="26" height="28" viewBox="0 0 26 28" fill="none"><g stroke="#1a1a1a" stroke-width="1.7" fill="none"><ellipse cx="13" cy="5.5" rx="10" ry="3.3"/>
<path d="M3 5.5V22.5C3 24.5 7.5 25.9 13 25.9S23 24.5 23 22.5V5.5"/><path d="M3 11.3C3 13.3 7.5 14.7 13 14.7S23 13.3 23 11.3M3 17C3 19 7.5 20.4 13 20.4S23 19 23 17"/></g></svg>
<div class="t" style="left:626.6px;top:1247.5px;font-size:21.60px;color:#1a1a1a;font-weight:400;font-family:'Liberation Mono', monospace;-webkit-text-stroke:0.25px #1a1a1a;">SRC</div>
<div class="t" style="left:711.5px;top:1228.3px;font-size:24.80px;color:#f7f5f3;font-weight:400;font-family:'Liberation Sans', sans-serif;letter-spacing:0.578px;">ecom.raw_customers</div>
<div class="r" style="left:1140.5px;top:1162.5px;width:344.5px;height:153.7px;background:#1c1a19;border:3.2px solid #b8b2ae;border-radius:13px;box-shadow:0 9px 20px rgba(0,0,0,0.6)"></div>
<div class="r" style="left:1172.2px;top:1203.5px;width:72.5px;height:72.3px;background:#dcebfd;border-radius:8px"></div>
<svg class="r" style="left:1195.7px;top:1213.5px;" width="26" height="26" viewBox="0 0 26 26" fill="none"><g stroke="#1a1a1a" stroke-width="1.7" fill="none" stroke-linejoin="round"><path d="M13 1.6L23.2 6.8V18.6L13 24.2L2.8 18.6V6.8Z"/><path d="M2.8 6.8L13 12.2L23.2 6.8M13 12.2V24.2"/></g></svg>
<div class="t" style="left:1189.0px;top:1247.5px;font-size:21.60px;color:#1a1a1a;font-weight:400;font-family:'Liberation Mono', monospace;-webkit-text-stroke:0.25px #1a1a1a;">MDL</div>
<div class="t" style="left:1273.8px;top:1228.4px;font-size:24.80px;color:#f7f5f3;font-weight:400;font-family:'Liberation Sans', sans-serif;letter-spacing:0.878px;">stg_customers</div>
<div class="r" style="left:1643.5px;top:1165.0px;width:298.9px;height:148.0px;background:#1c1a19;border:1.5px solid #595552;border-radius:12px"></div>
<div class="r" style="left:1672.8px;top:1203.5px;width:72.5px;height:72.3px;background:#dcebfd;border-radius:8px"></div>
<svg class="r" style="left:1696.3px;top:1213.5px;" width="26" height="26" viewBox="0 0 26 26" fill="none"><g stroke="#1a1a1a" stroke-width="1.7" fill="none" stroke-linejoin="round"><path d="M13 1.6L23.2 6.8V18.6L13 24.2L2.8 18.6V6.8Z"/><path d="M2.8 6.8L13 12.2L23.2 6.8M13 12.2V24.2"/></g></svg>
<div class="t" style="left:1689.6px;top:1247.5px;font-size:21.60px;color:#1a1a1a;font-weight:400;font-family:'Liberation Mono', monospace;-webkit-text-stroke:0.25px #1a1a1a;">MDL</div>
<div class="t" style="left:1774.1px;top:1228.6px;font-size:24.80px;color:#f7f5f3;font-weight:400;font-family:'Liberation Sans', sans-serif;letter-spacing:0.814px;">customers</div>
<div class="r" style="left:2118.8px;top:1165.0px;width:290.2px;height:148.0px;background:#1c1a19;border:1.5px solid #595552;border-radius:12px"></div>
<div class="r" style="left:2148.1px;top:1203.5px;width:72.5px;height:72.3px;background:#f2b6c6;border-radius:8px"></div>
<svg class="r" style="left:2170.1px;top:1212.5px;" width="28" height="28" viewBox="0 0 28 28" fill="none"><g stroke="#1a1a1a" stroke-width="1.7" fill="none"><circle cx="7" cy="5.5" r="3.2"/><circle cx="21.5" cy="11.5" r="3.2"/><circle cx="10.5" cy="22" r="3.2"/>
<path d="M8.1 8.5L9.6 18.9M10.1 6.8L18.5 10.3M19.2 13.8L12.9 19.8"/></g></svg>
<div class="t" style="left:2164.9px;top:1247.5px;font-size:21.60px;color:#1a1a1a;font-weight:400;font-family:'Liberation Mono', monospace;-webkit-text-stroke:0.25px #1a1a1a;">SEM</div>
<div class="t" style="left:2249.4px;top:1228.6px;font-size:24.80px;color:#f7f5f3;font-weight:400;font-family:'Liberation Sans', sans-serif;letter-spacing:0.864px;">customers</div>
<div class="r" style="left:1695.3px;top:1132.0px;width:549.3px;height:71.7px;background:rgba(28,26,25,0.9);border:1.5px solid #595552;border-radius:11px"></div>
<div class="r" style="left:2040.6px;top:1132.5px;width:1.5px;height:70.7px;background:#595552"></div>
<div class="t" style="left:1718.2px;top:1156.3px;font-size:24.60px;color:#f4f2f0;font-weight:400;font-family:'Liberation Sans', sans-serif;letter-spacing:0.159px;">2+stg_customers+2</div>
<div class="t" style="left:2060.2px;top:1156.3px;font-size:24.60px;color:#f4f2f0;font-weight:400;font-family:'Liberation Sans', sans-serif;letter-spacing:0.997px;-webkit-text-stroke:0.7px #f4f2f0;">Update Graph</div>
<div class="r" style="left:2277.5px;top:1132.0px;width:69.1px;height:69.2px;background:rgba(28,26,25,0.9);border:1.5px solid #595552;border-radius:11px"></div>
<svg class="r" style="left:2296.0px;top:1152.0px;" width="33" height="33" viewBox="0 0 33 33" fill="none"><g stroke="#f4f2f0" stroke-width="2" fill="none"><path d="M2.5 9V2.5H9M23 2.5H30V9M30 23.5V30H23M9 30H2.5V23.5"/></g></svg>
<div class="r" style="left:2362.3px;top:1132.0px;width:69.1px;height:69.2px;background:rgba(28,26,25,0.9);border:1.5px solid #595552;border-radius:11px"></div>
<svg class="r" style="left:2381.0px;top:1150.0px;" width="32" height="36" viewBox="0 0 32 36" fill="none"><g stroke="#f4f2f0" stroke-width="2" fill="none"><path d="M26.5 17.5A11.8 11.8 0 1 1 21.8 8.2"/><path d="M17.8 3.8L22.6 8.3L18.2 12.8"/></g></svg>
<div class="r" style="left:0.0px;top:1402.5px;width:2474.0px;height:1.0px;background:#595552"></div>
<div class="r" style="left:0.0px;top:1403.5px;width:2474.0px;height:66.5px;background:#1c1b1a"></div>
<div class="r" style="left:0.0px;top:1403.5px;width:69.0px;height:66.5px;background:#1a1918"></div>
<div class="r" style="left:69.0px;top:1403.5px;width:1.0px;height:66.5px;background:#3a3836"></div>
<svg class="r" style="left:24.0px;top:1431.0px;" width="20" height="14" viewBox="0 0 20 14" fill="none"><path d="M2.5 11L9.5 3.5L16.5 11" stroke="#b5afab" stroke-width="1.7" fill="none"/></svg>
<div class="r" style="left:73.0px;top:1404.0px;width:1694.0px;height:76.0px;background:#1a1918;border-radius:0 10px 0 0;border-right:1px solid #232120"></div>
<div class="t" style="left:98.7px;top:1428.5px;font-size:24.60px;color:#8a8582;font-weight:400;font-family:'Liberation Sans', sans-serif;letter-spacing:0.244px;">dbt build --select &lt;model_name&gt;</div>
<div class="r" style="left:1789.0px;top:1420.8px;width:72.0px;height:36.4px;background:#5a3ee8;border-radius:18.2px"></div>
<svg class="r" style="left:1800.0px;top:1430.0px;" width="22" height="17" viewBox="0 0 22 17" fill="none"><path d="M2.5 8.5L7.5 13L18.5 3" stroke="#f4f2f0" stroke-width="1.7" fill="none"/></svg>
<div class="r" style="left:1829.0px;top:1426.3px;width:25.4px;height:25.4px;background:#f0eeec;border-radius:50%"></div>
<div class="t" style="left:1883.2px;top:1425.9px;font-size:25.60px;color:#aaa4a1;font-weight:400;font-family:'Liberation Sans', sans-serif;letter-spacing:0.723px;-webkit-text-stroke:0.55px #aaa4a1;">Defer to staging/production</div>
<svg class="r" style="left:2216.0px;top:1424.0px;" width="25" height="25" viewBox="0 0 25 25" fill="none"><g stroke="#8a8582" stroke-width="1.3" fill="none"><circle cx="12.4" cy="12.6" r="10"/><path d="M9.3 9.8a3.1 3.1 0 1 1 4.4 2.8c-1 .5-1.3 1.1-1.3 2.2"/></g><circle cx="12.4" cy="17.8" r="0.9" fill="#8a8582"/></svg>
<div class="r" style="left:2261.3px;top:1418.2px;width:126.4px;height:43.0px;background:#245a28;border-radius:9px"></div>
<svg class="r" style="left:2270.0px;top:1426.0px;" width="30" height="28" viewBox="0 0 30 28" fill="none"><circle cx="14.5" cy="13.8" r="11.7" stroke="#f4f2f0" stroke-width="1.8" fill="none"/></svg>
<div class="t" style="left:2308.3px;top:1426.8px;font-size:24.60px;color:#f7f5f3;font-weight:700;font-family:'Liberation Sans', sans-serif;letter-spacing:-1.485px;">Ready</div>
<div class="r" style="left:2402.1px;top:1412.1px;width:59.9px;height:54.3px;border:1.5px solid #595552;border-radius:9px;background:#1a1918"></div>
<div class="r" style="left:2419.8px;top:1436.8px;width:5.4px;height:5.4px;background:#f4f2f0;border-radius:50%"></div>
<div class="r" style="left:2429.3px;top:1436.8px;width:5.4px;height:5.4px;background:#f4f2f0;border-radius:50%"></div>
<div class="r" style="left:2438.8px;top:1436.8px;width:5.4px;height:5.4px;background:#f4f2f0;border-radius:50%"></div>
</body></html>
